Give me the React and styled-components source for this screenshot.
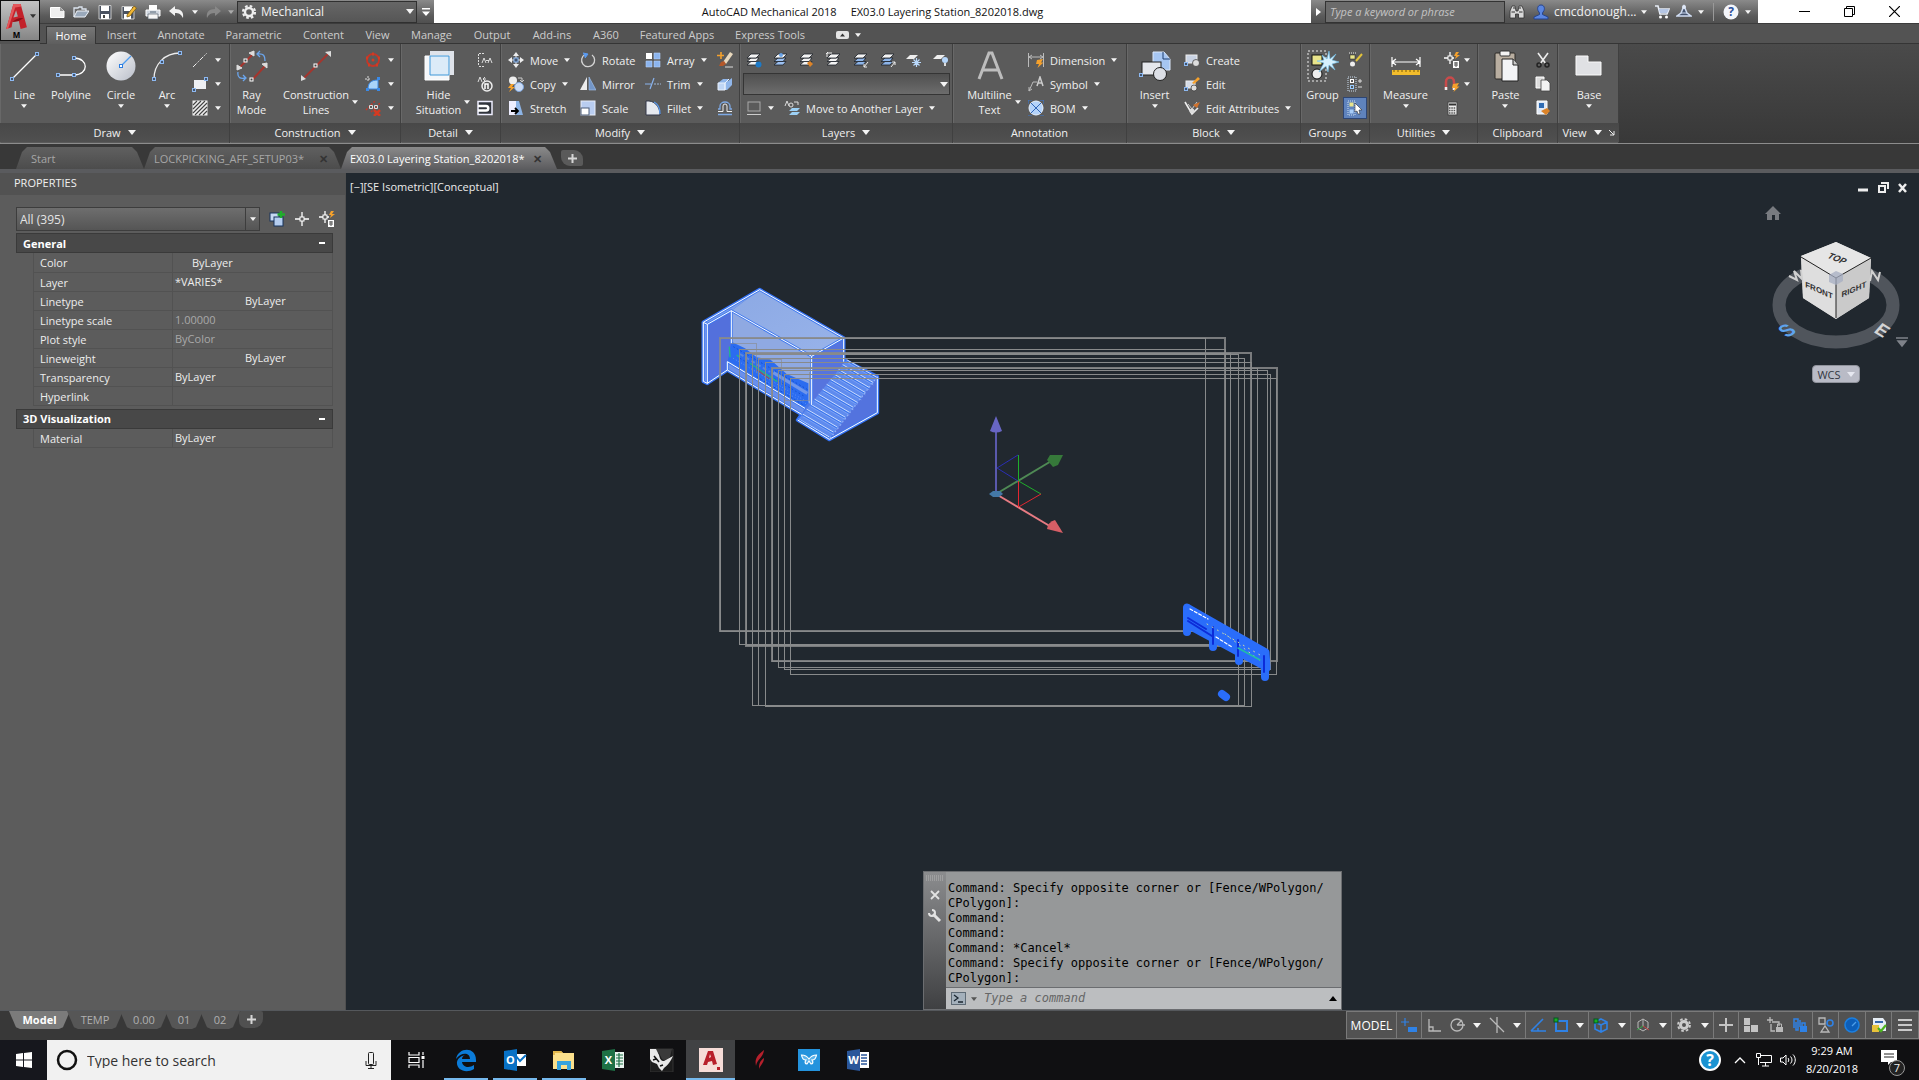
import React from "react";
import styled, { createGlobalStyle, css } from "styled-components";

const UI = `"Open Sans", "Noto Sans", "Liberation Sans", sans-serif`;

const Global = createGlobalStyle`
  * { box-sizing: border-box; }
  body { margin: 0; background: #383838; font: 11px/15px ${UI}; color: #f0f0f0; overflow: hidden; }
  button, input, select { font: inherit; color: inherit; margin: 0; padding: 0; border: 0; background: none; border-radius: 0; outline: 0; }
  svg { display: block; flex: none; }
`;

const Window = styled.div`
  display: flex;
  flex-direction: column;
  height: 100vh;
`;

/* ---------- generic glyphs ---------- */

const Caret = ({ size = 6, color = "#f4f4f4" }) => (
  <svg width={size} height={size / 2 + 1} viewBox="0 0 8 5">
    <path d="M0 0H8L4 5Z" fill={color} />
  </svg>
);

const Glyph = ({ s = 16, children }) => (
  <svg width={s} height={s} viewBox={`0 0 ${s} ${s}`} fill="none" aria-hidden="true">
    {children}
  </svg>
);

const Node = ({ x, y }) => (
  <rect x={x - 1.5} y={y - 1.5} width="3" height="3" fill="#43556e" stroke="#8db9f2" />
);

const Sheets = ({ tint = "#f4f4f4", children }) => (
  <Glyph>
    <path d="M5 9.500H13L10 13H1Z" fill={tint} stroke="#1d222a" strokeWidth=".8" />
    <path d="M5 6H13L10 9.500H1Z" fill={tint} stroke="#1d222a" strokeWidth=".8" />
    <path d="M5 2H14L10 6H1Z" fill="#f4f4f4" stroke="#1d222a" strokeWidth=".8" />
    {children}
  </Glyph>
);

const bolt = <path d="M9 8L15 7L13 10.5L15.5 10.5L9.5 16L11 12H8Z" fill="#f5a12c" />;

const icons = {
  logo: (
    <svg width="24" height="27" viewBox="0 0 26 30" aria-hidden="true">
      <path d="M1 29L9 1H17L24 27L17 29L15 20L8 21L7 27Z" fill="#c3212a" />
      <path d="M12 8L9 16L14 15Z" fill="#aaa" />
      <path d="M9 1H17L18 4L11 5L3 29H1Z" fill="#e4575a" />
      <path d="M8 21C12 17 17 16 20 17L15 20Z" fill="#8b0f16" />
    </svg>
  ),
  fileNew: <Glyph><path d="M1.5 3.5H11L15 7V13.5H1.5Z" fill="#eee" stroke="#fff" /><path d="M11 3L15 7H11Z" fill="#999" /></Glyph>,
  open: <Glyph><path d="M1 13V4H5L6 3H9V5H13V7" stroke="#dce4ee" strokeWidth="1.3" /><path d="M1 13L4 7H16L12 13Z" fill="#9aa9bb" stroke="#eef2f8" /></Glyph>,
  save: <Glyph><path d="M2 1.500H14V15H2Z" fill="#4a5260" stroke="#c8c8c8" /><rect x="4" y="2" width="8" height="5" fill="#fff" /><rect x="4" y="10" width="8" height="5" fill="#fff" /><rect x="6" y="11" width="2" height="3" fill="#444" /></Glyph>,
  saveAs: <Glyph><path d="M1 2.500H13V15H1Z" fill="#4a5260" stroke="#c8c8c8" /><rect x="3" y="3" width="8" height="4" fill="#fff" /><rect x="3" y="10" width="7" height="5" fill="#fff" /><path d="M6 11L13 2L15.500 4L9 12L6 13Z" fill="#f0b636" stroke="#70510a" strokeWidth=".7" /></Glyph>,
  print: <Glyph><path d="M4 1H12V6H4Z" fill="#fff" /><path d="M1 6H15V12H1Z" fill="#cfd6df" stroke="#fff" /><path d="M3 10H13V15H3Z" fill="#f6f6f6" stroke="#5a6470" strokeWidth=".7" /><path d="M5 8H11" stroke="#567" /></Glyph>,
  undo: <Glyph><path d="M6 2V5C12 5 15 8 14 14C12 10 10 9 6 9V12L0 7Z" fill="#f2f2f2" /></Glyph>,
  redo: <Glyph><path d="M10 2V5C4 5 1 8 2 14C4 10 6 9 10 9V12L16 7Z" fill="#888" /></Glyph>,
  gear: <Glyph><circle cx="8" cy="8" r="4" stroke="#eee" strokeWidth="2.400" /><circle cx="8" cy="8" r="6" stroke="#eee" strokeWidth="2.200" strokeDasharray="2.600 2.110" /></Glyph>,
  binoc: <Glyph><path d="M1 14V7L3 2H6L7 7H9L10 2H13L15 7V14H9.500V10H6.500V14Z" fill="#d9d9d9" stroke="#333" strokeWidth=".8" /><path d="M2.500 8H6M10 8H13.500M4 4H6M10 4H12" stroke="#333" /></Glyph>,
  user: <Glyph><path d="M8 1C5 1 4 4 5 6.500L6.500 9V10.500L1 13V15H15V13L9.500 10.500V9L11 6.500C12 4 11 1 8 1Z" fill="#5b86e0" stroke="#24438e" /></Glyph>,
  cart: <Glyph><path d="M1 2H4L6 10H13L15 5H5" stroke="#e8edf6" strokeWidth="1.600" /><path d="M5 5H15L13 9H6Z" fill="#b5c6e4" /><circle cx="6.500" cy="13" r="1.500" fill="#fff" /><circle cx="12.500" cy="13" r="1.500" fill="#fff" /></Glyph>,
  share: <Glyph><path d="M8 2L11 9L15 12H1L5 9Z" stroke="#cfdcf2" strokeWidth="1.500" fill="#45536e" /><circle cx="8" cy="3" r="2" fill="#dfe8f7" /><path d="M5 9H11" stroke="#cfdcf2" /></Glyph>,
  line: <Glyph s={32}><path d="M3 29L28 4" stroke="#fff" strokeWidth="1.200" /><Node x={3} y={29} /><Node x={28} y={4} /></Glyph>,
  polyline: <Glyph s={32}><path d="M3 25H19C34 25 34 8 19 8" stroke="#fff" strokeWidth="1.300" /><Node x={3} y={25} /><Node x={19} y={25} /><Node x={19} y={8} /></Glyph>,
  circle: (
    <Glyph s={32}>
      <defs><linearGradient id="disc" x2="1" y2="1"><stop stopColor="#fff" /><stop offset="1" stopColor="#b9bec9" /></linearGradient></defs>
      <circle cx="16" cy="16" r="14.500" fill="url(#disc)" /><path d="M16 16L26 6" stroke="#4b9bf0" strokeWidth="1.200" /><rect x="14.500" y="14.500" width="3" height="3" fill="#fff" stroke="#2c7de0" />
    </Glyph>
  ),
  arc: <Glyph s={32}><path d="M3 29C3 14 14 3 29 3" stroke="#eee" strokeWidth="1.300" /><Node x={3} y={29} /><Node x={11} y={12} /><Node x={29} y={3} /></Glyph>,
  centerLine: <Glyph><path d="M1 15L15 1" stroke="#eee" strokeDasharray="5 1.500 1.500 1.500" /></Glyph>,
  rect: <Glyph><rect x="2" y="4" width="12" height="9" fill="#eef0f4" /><Node x={2} y={14} /><Node x={14} y={3} /></Glyph>,
  hatch: <Glyph><rect x=".5" y=".5" width="15" height="15" fill="#eee" /><path d="M1 5L5 1M1 9L9 1M1 13L13 1M3 15L15 3M7 15L15 7M11 15L15 11" stroke="#444" strokeWidth="1.100" /></Glyph>,
  ray: (
    <Glyph s={32}>
      <path d="M4 17L16 5M17 29L29 16" stroke="#a5352d" strokeWidth="2" />
      <path d="M18 1V6L13 3ZM1 15V20L6 18ZM31 13V18L26 14Z" fill="#ddd" stroke="#ddd" />
      <path d="M21 4C28 3 29 6 29 11M24 1L21 4L24 7M2 22C1 28 5 29 9 28M7 25L10 28L7 31" stroke="#6ba6ee" strokeWidth="1.300" />
      <rect x="8" y="9" width="3" height="3" fill="#444" stroke="#fff" /><rect x="14" y="28" width="3" height="3" fill="#444" stroke="#fff" />
    </Glyph>
  ),
  xline: <Glyph s={32}><path d="M4 28L28 4" stroke="#a5352d" strokeWidth="1.800" /><path d="M31 1V7L25 2ZM1 31V25L6 29Z" fill="#ddd" /><rect x="14" y="14" width="3" height="3" fill="#444" stroke="#fff" /></Glyph>,
  redCircle: <Glyph><circle cx="8" cy="8" r="6" stroke="#c43628" strokeWidth="1.800" /><circle cx="8" cy="8" r="1.500" fill="#d33b22" /><path d="M7 2H9M1 6H3M13 6H15M3 13H5M11 13H13" stroke="#d33b22" strokeWidth="3" /></Glyph>,
  contour: <Glyph><path d="M3 13C3 7 6 4 13 4V13Z" fill="#a9d4fa" stroke="#3a8ae8" /><path d="M0 3H6M3 0V6" stroke="#ddd" strokeDasharray="2 1" /><path d="M12 1h3v3h-3zM1 12h3v3H1zM12 12h3v3h-3z" fill="#3a8ae8" /></Glyph>,
  eraseC: <Glyph><path d="M1 10L10 1M6 12L15 3" stroke="#c43628" strokeDasharray="2 1.500" strokeWidth="1.500" /><path d="M4.500 5.500h3v3h-3zM9.500 5.500h3v3h-3z" stroke="#ddd" /><path d="M9 10L15 16M15 10L9 16" stroke="#d33b22" strokeWidth="2.500" /></Glyph>,
  hide: <Glyph s={32}><path d="M7 1H31V25H7Z" fill="#dfe3ea" /><path d="M2 6H26V30H2Z" fill="#f5f7fa" stroke="#fff" /><path d="M7 6H26V25H7Z" fill="#dcebf8" stroke="#3f97d8" /></Glyph>,
  section: <Glyph><path d="M1.500 2V14M2 1.500H8M2 14.500H8" stroke="#ddd" strokeDasharray="2 1" /><path d="M5 11L7 6L9 11M9 8.500H12M11 11L13 6L15 11" stroke="#ddd" /></Glyph>,
  detail: <Glyph><path d="M1 6L3 1L5 6M8 1L6 3L8 5M6 3H9" stroke="#ddd" /><circle cx="10" cy="10" r="5" stroke="#eee" strokeWidth="1.500" /><path d="M8 13V8H11V13" stroke="#fff" strokeWidth="1.500" /></Glyph>,
  breakout: <Glyph><rect x="1" y="1.500" width="14" height="13" fill="#30343c" stroke="#eef" strokeWidth="1.500" /><path d="M1 6H9C12 6 12 10.500 9 10.500H1" stroke="#fff" strokeWidth="2.500" /></Glyph>,
  move: <Glyph><path d="M8 0L11 4H5ZM8 16L11 12H5ZM0 8L4 5V11ZM16 8L12 5V11Z" fill="#eee" /><path d="M8 3V13M3 8H13" stroke="#eee" /><rect x="6" y="6" width="4" height="4" fill="#43556e" stroke="#8db9f2" /></Glyph>,
  copy: <Glyph><circle cx="5" cy="4.500" r="4" fill="#eee" /><circle cx="11" cy="11" r="4.500" fill="#cbdcf6" stroke="#7ea5dc" /><path d="M10 2H14V5M12 4L14 6L16 4" stroke="#ccc" /><path d="M3 8L0 12H3L1 16L7 11H4L6 8Z" fill="#f5a12c" /></Glyph>,
  stretch: <Glyph><path d="M1 1H8V15H1Z" fill="#eef" /><path d="M8 1H11L15 15H8Z" fill="#8db4e6" /><path d="M3 11H9M7 8L10 11L7 14" stroke="#000" strokeWidth="1.800" /></Glyph>,
  rotate: <Glyph><path d="M12 3A6.500 6.500 0 1 1 5 2.500" stroke="#d5d5d5" strokeWidth="1.300" /><path d="M3 1L8 2L5 6" fill="#5b9bf0" stroke="#5b9bf0" /></Glyph>,
  mirror: <Glyph><path d="M7 1V14H0Z" fill="#eee" /><path d="M9 1V14H16Z" fill="#7396c8" stroke="#a8c7f0" strokeWidth=".6" /></Glyph>,
  scale: <Glyph><rect x="1" y="1" width="14" height="14" fill="#b9cdf0" stroke="#e9eef8" /><rect x="1" y="8" width="8" height="7" fill="#fff" stroke="#4c5c78" /></Glyph>,
  array: <Glyph><path d="M1 1H7V7H1Z" fill="#fff" /><path d="M9 1H15V7H9ZM1 9H7V15H1ZM9 9H15V15H9Z" fill="#8bb4ee" stroke="#b5d1f8" strokeWidth=".6" /></Glyph>,
  trim: <Glyph><path d="M0 8H6M5 13L9 2" stroke="#89b3ee" strokeWidth="1.200" /><path d="M9 8H16" stroke="#9fb8d8" strokeDasharray="2 1" /></Glyph>,
  fillet: <Glyph><path d="M1 1C9 0 15 6 15 15H1Z" fill="#e6e9ef" stroke="#34394a" /><path d="M9 2C13 4 15 9 15 14" stroke="#5b9bf0" strokeWidth="1.300" /></Glyph>,
  erase: <Glyph><path d="M6 10L13 0L16 2L9 12Z" fill="#e8d8bd" /><path d="M4 10L7 9L9 12L6 14L2 14Z" fill="#b4582a" /><path d="M4 0V7M0 3.500H7" stroke="#f5a12c" strokeWidth="1.600" /><path d="M8 15H16" stroke="#ddd" /></Glyph>,
  box: <Glyph><path d="M1 7L6 3H11V5L15 2V9L10 14H1Z" fill="#90b6ea" /><path d="M1 7H8V14H1ZM8 7L12 3M8 7V14" stroke="#e8f0fb" fill="#c0d6f5" /></Glyph>,
  offset: <Glyph><path d="M1 11.500H6V6A2 2 0 0 1 10 6V11.500H15" stroke="#eee" /><path d="M1 14.500H15M1 9H3V6A5 4 0 0 1 13 6V9H15" stroke="#7ea9e4" strokeWidth="1.300" /></Glyph>,
  lay1: <Sheets><circle cx="12.500" cy="12.500" r="3" fill="#1c7ac8" /></Sheets>,
  lay2: <Sheets tint="#9cc0f0"><circle cx="8" cy="3" r="2" fill="#6aa4e8" /></Sheets>,
  lay3: <Sheets><path d="M8 11L11 9L14 12L11 15Z" fill="#dc8328" /></Sheets>,
  lay4: <Sheets><path d="M6 1H1V5M0 2L2 0" stroke="#eee" /></Sheets>,
  lay5: <Sheets tint="#8db4e8"><path d="M15 10L11 15M11 12V15H14" stroke="#eee" /></Sheets>,
  lay6: <Sheets tint="#8db4e8"><path d="M11 15L15 10M12 10H15V13" stroke="#eee" /></Sheets>,
  lay7: <Glyph><path d="M4 3H12L8 7H0Z" fill="#eee" /><path d="M10.500 6V15M6 10.500H15M7.500 7.500L13.500 13.500M13.500 7.500L7.500 13.500" stroke="#b9d8fb" strokeWidth="1.200" /></Glyph>,
  lay8: <Glyph><path d="M4 3H12L8 7H0Z" fill="#eee" /><circle cx="12" cy="8" r="3" fill="#b5d6fb" /><path d="M12 11V14" stroke="#ddd" strokeWidth="2" /></Glyph>,
  laySq: <Glyph><rect x="2" y="2" width="12" height="9" stroke="#aaa" /><path d="M1 14.500H15" stroke="#ccc" /></Glyph>,
  layMove: <Glyph><path d="M1 6L3 1L5 6M10 2H14V5" stroke="#ddd" /><circle cx="7" cy="5" r="2" stroke="#ddd" /><path d="M8 8H16L13 11H5ZM8 12H16L13 15H5Z" fill="#9cd0f5" /></Glyph>,
  mtext: <Glyph s={32}><path d="M5 29L15 3H18L28 29M9 20H24" stroke="#bdbdbd" strokeWidth="3" /></Glyph>,
  dim: <Glyph><path d="M.5 1V15M15.500 1V15M1 5H15M4 3L1 5L4 7M12 3L15 5L12 7" stroke="#bbb" />{bolt}</Glyph>,
  symbol: <Glyph><path d="M1 15L5 6H9M1 15V11M1 15L4 13" stroke="#bbb" /><path d="M9 10L12 1L15 10M10 7H14" stroke="#ccc" strokeWidth="1.500" /></Glyph>,
  bom: <Glyph><path d="M0 0H4M12 0H16M0 16H4M12 16H16M0 0V4M16 0V4" stroke="#3a78d0" /><circle cx="8" cy="8" r="7" fill="#b4d3fa" stroke="#e9f3ff" /><path d="M3 3L13 13M13 3L3 13" stroke="#2f66b8" /></Glyph>,
  insert: <Glyph s={32}><path d="M14 2H25L31 9V20H14Z" fill="#a6c6f2" stroke="#dbe8fb" /><path d="M24 2V9H31" stroke="#1d3c6e" /><rect x="3" y="12" width="19" height="13" fill="#e5e7ec" stroke="#222" /><circle cx="21" cy="24" r="6.500" fill="#dcdfe6" stroke="#222" /><Node x={2} y={25} /></Glyph>,
  create: <Glyph><rect x="2" y="3" width="11" height="8" fill="#c9d3e4" stroke="#eee" /><circle cx="12" cy="11" r="3.500" fill="#ddd" stroke="#333" strokeWidth=".7" /><Node x={2} y={12} /></Glyph>,
  edit: <Glyph><rect x="2" y="5" width="9" height="7" fill="#d5dbe6" stroke="#eee" /><circle cx="10" cy="12" r="3" fill="#ddd" stroke="#333" strokeWidth=".7" /><path d="M8 7L14 1L16 3L10 8Z" fill="#f5a12c" /><Node x={2} y={13} /></Glyph>,
  attr: <Glyph><path d="M1 2L8 14L14 8" stroke="#eee" strokeWidth="1.600" /><path d="M4 4L8 9L13 2" stroke="#ccc" /><path d="M9 5L13 8L16 2Z" fill="#d2722c" /><circle cx="8" cy="11" r="2.500" fill="#ddd" /></Glyph>,
  group: (
    <Glyph s={32}>
      <path d="M1 1H19V31H1Z" stroke="#eee" strokeDasharray="2 2" /><rect x="5" y="5" width="10" height="10" fill="#e8e48c" stroke="#111" />
      <circle cx="10" cy="24" r="5" fill="#eee" stroke="#111" /><path d="M22 1L23 9L29 4L25 10L32 12L25 14L28 20L22 15L21 22L19 16L12 22L17 13L10 11L17 10L15 5L20 9Z" fill="#d6f1fe" stroke="#6cc0ec" strokeWidth=".6" />
    </Glyph>
  ),
  grpEdit: <Glyph><path d="M2 1H10" stroke="#eee" strokeDasharray="1 1" /><rect x="3" y="3" width="5" height="4" fill="#e8e48c" stroke="#222" strokeWidth=".5" /><circle cx="5.500" cy="12" r="2.500" fill="#eee" /><path d="M9 9L15 2" stroke="#e2c23a" strokeWidth="2" /></Glyph>,
  grpAdd: <Glyph><path d="M1 1H9V15H1Z" stroke="#cde" strokeDasharray="1 1" /><rect x="3.500" y="3.500" width="3" height="3" stroke="#fff" /><rect x="3.500" y="9.500" width="3" height="3" stroke="#9cf" /><path d="M11 5H15M13 3V7M11 11H15" stroke="#ddd" /></Glyph>,
  grpSel: <Glyph><path d="M1 1H8V15H1Z" stroke="#cde" strokeDasharray="1 1" /><rect x="2.500" y="2.500" width="4" height="4" fill="#e8e48c" /><rect x="2.500" y="9.500" width="4" height="4" fill="#a8cdf8" /><path d="M8 3L15 10H12L13 14L11 14L10 11L8 12Z" fill="#fff" stroke="#333" strokeWidth=".6" /></Glyph>,
  measure: <Glyph s={32}><path d="M2 7V17M30 7V17M2 12H30M6 9L2 12L6 15M26 9L30 12L26 15" stroke="#fff" strokeWidth="1.200" /><rect x="2" y="20" width="28" height="5" fill="#f3bd2c" /><path d="M4 20V22M8 20V22M12 20V22M16 20V22M20 20V22M24 20V22M28 20V22" stroke="#7d5c06" /></Glyph>,
  qsel: <Glyph><path d="M0 6H4M8 6H10M6 0V4M6 8V12" stroke="#fff" strokeWidth="1.300" /><rect x="4" y="4" width="4" height="4" stroke="#fff" /><path d="M12 0L15 0L13 3H16L11 7L12 4H10Z" fill="#f5a12c" /><rect x="9" y="9" width="6" height="7" fill="#fff" /><path d="M10 11H14M10 13H14M12 10V15" stroke="#555" /></Glyph>,
  magnet: <Glyph><path d="M2 14V6C2 0 10 0 10 6V14" stroke="#c94b4b" strokeWidth="2.500" /><path d="M2 11V14M10 11V14" stroke="#eee" strokeWidth="2.500" />{bolt}</Glyph>,
  calc: <Glyph><rect x="4" y="2" width="9" height="13" fill="#eee" stroke="#444" /><path d="M5 4.500H12" stroke="#333" strokeWidth="2" /><path d="M5 8H12M5 10.500H12M5 13H12" stroke="#555" strokeDasharray="1.500 .8" strokeWidth="1.300" /></Glyph>,
  paste: <Glyph s={32}><rect x="5" y="3" width="20" height="26" rx="1" fill="#b9aea0" stroke="#2d2a26" /><rect x="10" y="1" width="10" height="5" rx="1" fill="#f4f4f4" stroke="#333" /><path d="M12 9H23L28 15V31H12Z" fill="#f3f4f6" stroke="#222" /><path d="M23 9V15H28" stroke="#222" fill="#ccc" /></Glyph>,
  cut: <Glyph><path d="M3 1L11 12M13 1L5 12" stroke="#eee" strokeWidth="1.600" /><circle cx="4" cy="13" r="2" stroke="#222" strokeWidth="1.500" /><circle cx="12" cy="13" r="2" stroke="#222" strokeWidth="1.500" /></Glyph>,
  copyClip: <Glyph><path d="M1 1H9V12H1Z" fill="#ddd" stroke="#fff" /><path d="M6 4H12L15 7V15H6Z" fill="#f4f4f4" stroke="#444" strokeWidth=".8" /></Glyph>,
  matchProp: <Glyph><path d="M2 1H12V14H2Z" fill="#dfe8f5" stroke="#fff" /><rect x="4" y="3" width="5" height="5" fill="#2f6cb4" /><path d="M6 11L12 8L15 11L11 15Z" fill="#dc8328" /></Glyph>,
  base: <Glyph s={32}><path d="M3 6H15V12H28V25H3Z" fill="#e0e1e4" stroke="#fafafa" /></Glyph>,
  pick: <Glyph><rect x="1" y="2" width="9" height="8" fill="#c6d8f2" stroke="#16325c" /><rect x="5" y="6" width="9" height="9" fill="#b4cdf0" stroke="#16325c" /><path d="M12 0V7M8.500 3.500H16" stroke="#1fae2b" strokeWidth="2.500" /></Glyph>,
  target: <Glyph><path d="M1 8H6M10 8H15M8 1V6M8 10V15" stroke="#fff" strokeWidth="1.300" /><rect x="6" y="6" width="4" height="4" stroke="#fff" /></Glyph>,
};

/* ---------- title bar + ribbon tabs ---------- */

const Header = styled.header`
  display: grid;
  grid-template-columns: 40px minmax(0, 1fr);
  grid-template-rows: 24px 20px;
  background: #535353;
`;

const AppButton = styled.button`
  grid-row: 1 / 3;
  height: 41px;
  display: grid;
  grid-template-columns: 1fr 6px;
  justify-items: center;
  align-items: center;
  padding: 1px 3px 1px 2px;
  border: 1px solid #111;
  background: linear-gradient(#c4c4c4, #858585);
  color: #000;
  font-weight: 700;
  font-size: 8px;
  line-height: 8px;
`;

const TitleBar = styled.div`
  display: flex;
  background: #fff;
  border-bottom: 1px solid #3c3c3c;
`;

const chrome = css`
  display: flex;
  align-items: center;
  background: linear-gradient(#8a8a8a, #5a5a5a 70%, #505050);
`;

const QuickAccess = styled.div`
  ${chrome}
  width: 394px;
  padding-left: 5px;
`;

const QuickButton = styled.button`
  width: ${(p) => p.$w || 32}px;
  height: 22px;
  display: grid;
  place-items: center;
`;

const Workspace = styled.label`
  display: flex;
  align-items: center;
  gap: 4px;
  width: 180px;
  height: 22px;
  margin-left: auto;
  padding: 0 2px 0 3px;
  background: linear-gradient(#666, #565656);
  border: 1px solid #303030;
  select { flex: 1; min-width: 0; appearance: none; font-size: 12px; }
`;

const WindowTitle = styled.div`
  flex: 1;
  display: flex;
  justify-content: center;
  align-items: center;
  gap: 14px;
  color: #111;
`;

const InfoCenter = styled.div`
  ${chrome}
  width: 447px;
  & > input {
    width: 180px;
    height: 22px;
    padding: 0 4px;
    border: 1px solid #333;
    background: #6b6b6b;
    font-style: italic;
  }
  input::placeholder { color: #c4c4c4; opacity: 1; }
`;

const Account = styled.button`
  display: flex;
  align-items: center;
  gap: 5px;
  padding: 0 4px;
  font-size: 12px;
`;

const Divider = styled.span`
  width: 1px;
  height: 18px;
  margin: 0 6px;
  background: #999;
`;

const CaptionButtons = styled.div`
  display: flex;
  margin-left: 24px;
  padding-right: 2px;
`;

const CaptionButton = styled.button`
  width: 45px;
  display: grid;
  place-items: center;
`;

const RibbonTabs = styled.nav`
  display: flex;
  align-items: flex-end;
  padding-left: 6px;
  border-bottom: 1px solid #353535;
`;

const RibbonTab = styled.button`
  width: ${(p) => p.$w}px;
  height: 17px;
  color: ${(p) => (p.$on ? "#fff" : "#cdcdcd")};
  ${(p) => p.$on && css`
    height: 18px;
    margin-bottom: -1px;
    background: linear-gradient(#777, #5e5e5e);
    border: 1px solid #353535;
    border-bottom: 0;
  `}
`;

const RibbonToggle = styled.button`
  display: flex;
  align-items: center;
  gap: 6px;
  height: 17px;
  margin-left: 21px;
`;

/* ---------- ribbon ---------- */

const Ribbon = styled.div`
  display: flex;
  height: 100px;
  background: linear-gradient(#4a4a4a, #383838);
  border-bottom: 1px solid #8c8c8c;
`;

const PanelBox = styled.section`
  display: grid;
  grid-template-rows: 1fr 19px;
  width: ${(p) => p.$w}px;
  padding-bottom: 1px;
  background: #5b5b5b;
  border-right: 1px solid #404040;
  box-shadow: inset 1px 0 #686868;
`;

const PanelBody = styled.div`
  display: flex;
  align-items: flex-start;
  padding: 4px 0 0 ${(p) => p.$pad}px;
`;

const PanelTitle = styled.button`
  display: flex;
  align-items: center;
  justify-content: center;
  gap: 7px;
  background: linear-gradient(#484848, #505050);
`;

const Panel = ({ title, w, pad = 1, menu = true, launcher, children }) => (
  <PanelBox $w={w}>
    <PanelBody $pad={pad}>{children}</PanelBody>
    <PanelTitle>
      {title}
      {menu && <Caret size={8} />}
      {launcher && (
        <svg width="6" height="6" viewBox="0 0 6 6" fill="none"><path d="M0 0L5 5M5 1V5H1" stroke="#eee" /></svg>
      )}
    </PanelTitle>
  </PanelBox>
);

const LargeButton = styled.button`
  width: ${(p) => p.$w}px;
  height: 72px;
  display: flex;
  flex-direction: column;
  align-items: center;
  padding-top: 2px;
`;

const LargeLabel = styled.span`
  display: flex;
  flex-direction: column;
  align-items: center;
  gap: 2px;
  margin-top: 5px;
  line-height: 15px;
`;

const TwoLine = styled.span`
  display: flex;
  align-items: center;
  gap: 3px;
  padding-left: ${(p) => (p.$menu ? 9 : 0)}px;
`;

const Large = ({ icon, label, w, menu, second }) => (
  <LargeButton $w={w}>
    {icons[icon]}
    {second ? (
      <LargeLabel>
        <TwoLine $menu={menu}>
          <span>{label}<br />{second}</span>
          {menu && <Caret />}
        </TwoLine>
      </LargeLabel>
    ) : (
      <LargeLabel>{label}{menu && <Caret />}</LargeLabel>
    )}
  </LargeButton>
);

const Column = styled.div`
  display: flex;
  flex-direction: column;
  width: ${(p) => p.$w}px;
  padding-left: ${(p) => p.$pad || 0}px;
`;

const ToolButton = styled.button`
  display: flex;
  align-items: center;
  gap: ${(p) => p.$gap || 6}px;
  height: 24px;
  white-space: nowrap;
  flex: none;
`;

const ToggledTool = styled.button`
  width: 24px;
  height: 22px;
  display: grid;
  place-items: center;
  margin: 1px 0 0 -4px;
  background: #5f83bd;
  border: 1px solid #2e4674;
`;

const Tool = ({ icon, label, menu, gap }) => (
  <ToolButton $gap={gap} aria-label={label || icon}>
    {icons[icon]}
    {label && <span>{label}</span>}
    {menu && <Caret />}
  </ToolButton>
);

const LayerIcons = styled.div`
  display: flex;
  justify-content: space-between;
  width: 203px;
  margin-left: 5px;
`;

const LayerSelect = styled.label`
  display: flex;
  align-items: center;
  height: 22px;
  margin: 1px 2px;
  padding-right: 1px;
  border: 1px solid #353535;
  background: linear-gradient(#505050, #6c6c6c);
  select { flex: 1; appearance: none; }
`;

const LayerRow = styled.div`
  display: flex;
  gap: 10px;
  padding-left: 5px;
`;

/* ---------- document tabs ---------- */

const DocTabs = styled.nav`
  display: flex;
  align-items: flex-end;
  height: 29px;
  padding-left: 16px;
  background: #383838;
  border-bottom: 4px solid #5a5b5e;
`;

const DocTab = styled.div`
  display: flex;
  align-items: center;
  gap: 8px;
  width: ${(p) => p.$w}px;
  height: 22px;
  padding: 0 ${(p) => p.$right || 13}px 0 ${(p) => p.$pad}px;
  clip-path: polygon(0 100%, 6px 5px, 11px 0, calc(100% - 12px) 0, calc(100% - 7px) 5px, 100% 100%);
  background: ${(p) => (p.$on ? "linear-gradient(#8a8a8a, #5c5c5f)" : "linear-gradient(#606060, #4c4c4c)")};
  color: ${(p) => (p.$on ? "#fff" : "#a6a6a6")};
  button { flex: 1; text-align: left; white-space: nowrap; }
  button + button { flex: none; color: #333; font-weight: 700; }
`;

const AddTab = styled.button`
  width: 22px;
  height: 16px;
  margin: 0 0 3px 4px;
  display: grid;
  place-items: center;
  background: #5a5a5a;
  border-radius: 2px 9px 2px 9px;
`;

const Plus = () => (
  <svg width="9" height="9" viewBox="0 0 9 9"><path d="M4.500 0V9M0 4.500H9" stroke="#d5d5d5" strokeWidth="2" /></svg>
);

/* ---------- properties palette ---------- */

const Workarea = styled.main`
  flex: 1;
  display: flex;
  min-height: 0;
`;

const Palette = styled.aside`
  width: 346px;
  background: #5c5c5c;
  border-right: 1px solid #505050;
`;

const PaletteTitle = styled.h2`
  margin: 0;
  height: 22px;
  padding-left: 14px;
  font-size: 11px;
  line-height: 20px;
  font-weight: 400;
  background: #525252;
`;

const SelectionRow = styled.div`
  display: flex;
  align-items: center;
  padding: 12px 0 0 16px;
  margin-bottom: 2px;
`;

const SelectionCombo = styled.label`
  display: flex;
  width: 244px;
  height: 24px;
  margin-right: 4px;
  border: 1px solid #3d3d3d;
  background: linear-gradient(#6e6e6e, #555);
  select { flex: 1; appearance: none; padding-left: 3px; font-size: 12px; color: #e4e4e4; }
  span { width: 14px; display: grid; place-items: center; border-left: 1px solid #3d3d3d; }
`;

const IconButton = styled.button`
  width: 25px;
  height: 22px;
  display: grid;
  place-items: center;
`;

const SectionTitle = styled.button`
  display: flex;
  width: 317px;
  height: 20px;
  margin: ${(p) => p.$top || 0}px 0 0 16px;
  padding: 0 7px 0 6px;
  justify-content: space-between;
  align-items: center;
  font-size: 11px;
  font-weight: 700;
  color: #fff;
  background: #484848;
  border: 1px solid #3a3a3a;
`;

const PropTable = styled.table`
  width: 300px;
  margin-left: 33px;
  border-collapse: collapse;
  table-layout: fixed;
  th, td {
    height: 19px;
    padding: 0 0 0 3px;
    border: 1px solid #525252;
    border-top: 0;
    line-height: 17px;
    font-weight: 400;
    text-align: left;
    color: #ededed;
  }
  th { width: 139px; padding-left: 6px; padding-top: 1px; }
`;

const Value = styled.td`
  && { padding-left: ${(p) => p.$pad || 2}px; color: ${(p) => (p.$dim ? "#a9a9a9" : "#ededed")}; }
`;

const general = [
  ["Color", "ByLayer", 19],
  ["Layer", "*VARIES*"],
  ["Linetype", "ByLayer", 72],
  ["Linetype scale", "1.00000", 2, true],
  ["Plot style", "ByColor", 2, true],
  ["Lineweight", "ByLayer", 72],
  ["Transparency", "ByLayer"],
  ["Hyperlink", ""],
];

const Properties = ({ rows }) => (
  <PropTable>
    <tbody>
      {rows.map(([name, value, pad, dim]) => (
        <tr key={name}>
          <th scope="row">{name}</th>
          <Value $pad={pad} $dim={dim}>{value}</Value>
        </tr>
      ))}
    </tbody>
  </PropTable>
);

const Minus = () => <svg width="6" height="2" viewBox="0 0 6 2"><path d="M0 1H6" stroke="#fff" strokeWidth="2" /></svg>;

/* ---------- viewport ---------- */

const Viewport = styled.section`
  position: relative;
  flex: 1;
  min-width: 0;
  background: #21282f;
  overflow: hidden;
`;

const ViewLabel = styled.div`
  padding: 6px 0 0 4px;
  color: #ececec;
`;

const ModelSvg = styled.svg`
  position: absolute;
  left: 334px;
  top: 97px;
`;

const ViewCubeBox = styled.div`
  position: absolute;
  right: 0;
  top: 0;
  width: 219px;
`;

const WcsButton = styled.button`
  position: absolute;
  left: 112px;
  top: 192px;
  display: flex;
  align-items: center;
  justify-content: center;
  gap: 6px;
  width: 48px;
  height: 18px;
  border-radius: 4px;
  background: #b9bbc6;
  border: 1px solid #8f929b;
  color: #33363f;
`;

const sheets = [
  [720, 338, 1205, 631, 1], [720, 338, 1225, 631, 2], [739, 349, 1225, 644, 1], [746, 353, 1251, 646, 2],
  [752, 354, 1238, 705, 1], [758, 358, 1244, 705, 1], [765, 362, 1251, 706, 1], [772, 368, 1277, 661, 2],
  [778, 370, 1267, 667, 1], [784, 374, 1270, 669, 1], [790, 378, 1276, 674, 1], [746, 353, 1230, 645, 1], [772, 368, 1257, 661, 1],
];

const stairCount = 13;

const Model = () => (
  <ModelSvg width="620" height="450" viewBox="680 270 620 450" fill="none">
    <defs>
      <linearGradient id="roof" x2="1" y2="1"><stop stopColor="#8ca9e4" /><stop offset="1" stopColor="#98b3ea" /></linearGradient>
    </defs>
    <g transform="translate(690 280) scale(.33333)" strokeLinejoin="round">
      <path d="M40 127L209 29L461 174L461 240L562 290V398L418 478L323 420L335 403L112 270L52 310L40 304Z" fill="#4b78e6" stroke="#2d6df6" strokeWidth="11" />
      <path d="M124 92L209 29L461 174L365 229Z" fill="url(#roof)" />
      <path d="M40 127L209 29L124 92L52 133Z" fill="#7c9fea" />
      <path d="M52 133L124 92V262L52 310Z" fill="#5370dc" />
      <path d="M40 127L52 133V310L40 304Z" fill="#6f94ee" />
      <path d="M124 92L365 229V375L124 190Z" fill="#8fa9e2" />
      <path d="M124 185L165 205L200 232L240 238L290 282L355 310V368L335 390L112 250Z" fill="#2b6cf0" />
      <path d="M250 278L352 340" stroke="#6f96ea" strokeWidth="10" />
      <path d="M150 222L240 276" stroke="#5d87dc" strokeWidth="6" strokeDasharray="12 8" />
      <path d="M130 200L355 330M150 235L345 350M200 290L340 375" stroke="#1450d0" strokeWidth="3" strokeDasharray="5 7" />
      <path d="M130 235L345 362M220 300L350 372" stroke="#9dbcf8" strokeWidth="2" strokeDasharray="2 7" />
      <path d="M118 200L120 232M140 225L150 232M180 250L262 305" stroke="#25b58b" strokeWidth="4" />
      <path d="M202 270L238 296" stroke="#8e5a5e" strokeWidth="4" />
      <path d="M112 250L345 385L335 403L112 270Z" fill="#6b90ea" />
      <path d="M365 229L461 174V250L365 375Z" fill="#5674de" />
      <path d="M470 240L562 290L418 478L323 420Z" fill="#5f8bee" />
      <path d="M562 290V398L418 478Z" fill="#5373de" />
      {Array.from({ length: stairCount }, (_, i) => {
        const t = i / (stairCount - 1);
        const x = 470 - 144 * t;
        const y = 242 + 178 * t;
        return (
          <g key={i}>
            <path d={`M${x} ${y}l92 54`} stroke="#3b76ee" strokeWidth="6" />
            <path d={`M${x} ${y - 3}l92 54`} stroke="#e9f1ff" strokeWidth="2.500" />
            <path d={`M${x} ${y + 4}l92 54`} stroke="#a5bff6" strokeWidth="1.500" />
          </g>
        );
      })}
      <path d="M40 127L209 29L461 174L365 229L124 92L52 133L40 127V304L52 310L112 270M52 133V310M124 92V190M365 229V375M461 174V245M112 245L345 385M112 270L335 403M112 245V270M562 290V398L418 478L323 420" stroke="#3f79f0" strokeWidth="8" />
      <path d="M40 127L209 29L461 174L365 229L124 92L52 133L40 127V304L52 310L112 270M52 133V310M124 92V190M365 229V375M461 174V245M112 245L345 385M112 270L335 403M112 245V270M562 290V398L418 478L323 420" stroke="#fff" strokeWidth="3" />
      <path d="M562 290L418 478" stroke="#8fb0f8" strokeWidth="4" strokeDasharray="5 7" />
    </g>
    <g stroke="#888a8b" shapeRendering="crispEdges">
      {sheets.map(([x1, y1, x2, y2, w], i) => (
        <rect key={i} x={x1} y={y1} width={x2 - x1} height={y2 - y1} strokeWidth={w} strokeOpacity={w === 2 ? 0.85 : 1} />
      ))}
      <path d="M731 343H756V373M758 359H781V385M784 385V400H809V372M739 349V372M746 352V376" strokeOpacity=".6" />
    </g>
    <g>
      <path d="M996 424V492" stroke="#5a59ad" strokeWidth="2" />
      <path d="M996 416L1002 431Q996 434 990 431Z" fill="#6866c4" />
      <path d="M996 494L1053 460" stroke="#4f8a55" strokeWidth="2" />
      <path d="M1063 455L1050 455L1047 460L1053 467L1058 465Z" fill="#36793a" />
      <path d="M996 494L1053 528" stroke="#e77b83" strokeWidth="2" />
      <path d="M1063 533L1055 520Q1048 522 1047 529Z" fill="#d65e66" />
      <path d="M997 468L1018 455M997 468L1018 481" stroke="#2b2fb4" />
      <path d="M1018.500 455V481L1041 494" stroke="#1fae2b" />
      <path d="M1018.500 481V507L1041 494" stroke="#e32630" />
      <path d="M989 494L993 491H1000L1003 494L999 497H993Z" fill="#4478a6" />
    </g>
    <g strokeLinecap="round" strokeLinejoin="round">
      <path d="M1187 607L1266 652L1267 668L1187 625Z" fill="#2a6dfa" stroke="#2a6dfa" strokeWidth="7" />
      <path d="M1187 608V632M1213 625V647M1239 640V661M1265 655V677" stroke="#2a6dfa" strokeWidth="8" />
      <path d="M1188 618L1206 629M1188 621L1212 636M1213 627V644M1238 640V656M1264 656V672" stroke="#0c2cd8" strokeWidth="2" />
      <path d="M1190 609L1208 619M1216 637L1232 647" stroke="#fff" strokeWidth="1.200" strokeDasharray="3 2" />
      <path d="M1207 624L1260 655M1225 634L1262 662" stroke="#c9d9a8" strokeWidth="1" strokeDasharray="1 5" />
      <path d="M1238 648L1260 660" stroke="#22bda6" strokeWidth="1.500" />
      <path d="M1222 694L1226 697" stroke="#2a6dfa" strokeWidth="8" />
    </g>
  </ModelSvg>
);

const CubeText = styled.text`
  font: 700 ${(p) => p.$s}px "Liberation Sans Narrow", "Liberation Sans", sans-serif;
  text-anchor: middle;
`;

const ViewCube = () => (
  <ViewCubeBox>
    <svg width="219" height="190" viewBox="0 0 219 190" fill="none">
      <ellipse cx="136" cy="132" rx="57" ry="37" stroke="#50555c" strokeWidth="13" />
      <path d="M65 41L73 33L81 41H79V47H75V42H72V47H67V41Z" fill="#787b80" />
      <path d="M101 83L136 69L171 85L169 125L136 146L103 125Z" fill="#d8d8d8" />
      <path d="M101 83L136 69L171 85L136 105Z" fill="#e6e6e6" />
      <path d="M101 83L136 105V146L103 125Z" fill="#dedede" />
      <path d="M136 105L171 85L169 125L136 146Z" fill="#cacaca" />
      <path d="M101 84L136 105L171 85M136 105V145" stroke="#222" />
      <path d="M129 102L136 98L143 101V108L136 112L129 109Z" fill="#a5aec2" fillOpacity=".75" />
      <CubeText $s={8} fill="#333" transform="translate(119 120) skewY(24)">FRONT</CubeText>
      <CubeText $s={8} fill="#333" transform="translate(154 119) skewY(-24)">RIGHT</CubeText>
      <CubeText $s={9} fill="#333" transform="translate(135 88) rotate(22) skewX(-20)">TOP</CubeText>
      <CubeText $s={19} fill="#5ea4ee" transform="translate(92 162) rotate(-28) skewX(20)">S</CubeText>
      <CubeText $s={18} fill="#d4d4d4" transform="translate(178 162) rotate(32) skewX(-10)">E</CubeText>
      <path d="M89 103L97 107L94 98L102 106L101 97M170 108L172 98L178 107L180 99" stroke="#d0d0d0" strokeWidth="2" />
      <path d="M196 165H208M198 168H206L202 173Z" stroke="#7f838a" fill="#7f838a" strokeWidth="1.500" />
      <path d="M158 17H168" stroke="#eee" strokeWidth="3" />
      <path d="M179 13H185V19H179ZM181 10H188V16" stroke="#eee" strokeWidth="2" />
      <path d="M199 11L206 19M206 11L199 19" stroke="#eee" strokeWidth="2.500" />
    </svg>
    <WcsButton>WCS<Caret size={8} color="#e6e8f0" /></WcsButton>
  </ViewCubeBox>
);

const CommandWindow = styled.div`
  position: absolute;
  left: 577px;
  bottom: 0;
  width: 419px;
  display: grid;
  grid-template-columns: 22px 1fr;
  font: 12px/15px "DejaVu Sans Mono", "Liberation Mono", monospace;
  border: 1px solid #6b6d70;
`;

const CommandGrip = styled.div`
  display: flex;
  flex-direction: column;
  align-items: center;
  gap: 9px;
  padding: 3px 1px 0 0;
  background: linear-gradient(#8b8c8e, #3f4042);
`;

const CommandLog = styled.div`
  padding: 9px 0 1px 2px;
  background: #969899;
  color: #000;
  white-space: pre;
`;

const CommandInput = styled.label`
  display: flex;
  align-items: center;
  gap: 5px;
  height: 22px;
  padding: 0 4px 0 5px;
  background: #bcbec0;
  border-top: 1px solid #6b6d70;
  input { flex: 1; padding-left: 2px; font-style: italic; }
  input::placeholder { color: #666; opacity: 1; }
`;

const log = [
  "Command: Specify opposite corner or [Fence/WPolygon/",
  "CPolygon]:",
  "Command:",
  "Command:",
  "Command: *Cancel*",
  "Command: Specify opposite corner or [Fence/WPolygon/",
  "CPolygon]:",
];

/* ---------- layout tabs + status bar ---------- */

const Footer = styled.footer`
  display: flex;
  justify-content: space-between;
  height: 30px;
  background: #383838;
  border-top: 1px solid #55585c;
`;

const LayoutTabs = styled.nav`
  display: flex;
  align-items: flex-start;
  padding-left: 9px;
`;

const LayoutTab = styled.button`
  width: ${(p) => p.$w}px;
  height: 18px;
  margin-right: -3px;
  padding-bottom: 2px;
  font-weight: ${(p) => (p.$on ? 700 : 400)};
  color: ${(p) => (p.$on ? "#fff" : "#b0b0b0")};
  background: ${(p) => (p.$on ? "#7b7b7b" : "#565656")};
  clip-path: polygon(0 0, 100% 0, calc(100% - 7px) 90%, calc(100% - 11px) 100%, 11px 100%, 7px 90%);
`;

const AddLayout = styled.button`
  width: 24px;
  height: 17px;
  margin-left: 2px;
  display: grid;
  place-items: center;
  background: #505050;
  border-radius: 2px 2px 9px 7px;
`;

const StatusBar = styled.div`
  display: flex;
  height: 28px;
  border: 1px solid #7a7a7a;
`;

const StatusCell = styled.div`
  display: flex;
  align-items: center;
  justify-content: space-around;
  width: ${(p) => p.$w}px;
  border-right: 1px solid #7a7a7a;
  background: #525252;
  &:last-child { border-right: 0; }
  button { display: grid; place-items: center; height: 26px; min-width: 8px; font-size: 12px; color: #fff; }
`;

const B = "#2f82e6";
const G = "#b9b9b9";
const st = {
  infer: <Glyph><path d="M4 1V9M0 5H8" stroke={B} strokeWidth="1.200" /><rect x="7" y="10" width="9" height="5" fill={B} /></Glyph>,
  ortho: <Glyph><path d="M3 2V14H15M3 10H7V14" stroke={G} strokeWidth="1.300" /></Glyph>,
  polar: <Glyph><circle cx="7" cy="8" r="6" stroke={G} strokeWidth="1.300" /><path d="M7 8H15M7 8L12 3" stroke={G} strokeWidth="1.300" /></Glyph>,
  iso: <Glyph><path d="M8 0V16M1 1L15 15" stroke={G} strokeWidth="1.300" /></Glyph>,
  track: <Glyph><path d="M1 14H16M1 14L13 2M8 11V14" stroke={B} strokeWidth="1.600" /></Glyph>,
  osnap: <Glyph><rect x="3" y="4" width="11" height="10" stroke={B} strokeWidth="2" /><rect x="1" y="1" width="4" height="4" fill="#18b020" stroke="#052" /></Glyph>,
  osnap3: <Glyph><path d="M8 2L14 5V12L8 15L2 12V5ZM8 8L14 5M8 8L2 5M8 8V15" stroke={B} strokeWidth="1.600" /><rect x="1" y="2" width="4" height="4" fill="#18b020" stroke="#052" /></Glyph>,
  ucs: <Glyph><path d="M8 2L13 5V11L8 14L3 11V5ZM8 2V9" stroke={G} /><path d="M8 9L2 13" stroke="#3a4" /><path d="M8 9L14 13" stroke="#c44" /></Glyph>,
  gear: <Glyph><circle cx="8" cy="8" r="3.500" stroke="#ccc" strokeWidth="3" /><circle cx="8" cy="8" r="6" stroke="#ccc" strokeWidth="1.800" strokeDasharray="2.600 2.110" /></Glyph>,
  plus: <Glyph><path d="M8 1V15M1 8H15" stroke="#c4c4c4" strokeWidth="2" /></Glyph>,
  quick: <Glyph><path d="M1 1H7V8H1ZM1 9H7V15H1ZM8 8H15V15H8Z" fill="#c4c4c4" /></Glyph>,
  lock: <Glyph><path d="M3 0V6M0 3H6M4 7V14H8M5 5H12V9" stroke={G} strokeWidth="1.300" /><rect x="9" y="10" width="7" height="5" fill={G} /><path d="M10.500 10V7H14.500V10" stroke={G} /></Glyph>,
  annot: <Glyph><path d="M2 11V2H6V13H4V5M8 3V10" stroke={B} strokeWidth="1.500" /><rect x="8" y="9" width="7" height="6" fill={B} /><path d="M10 9V6H13V9" stroke={B} strokeWidth="1.500" /></Glyph>,
  isolate: <Glyph><path d="M1 1H7V7H1ZM3 15L7 9L11 15Z" stroke={G} strokeWidth="1.300" /><circle cx="12" cy="6" r="3" stroke={B} strokeWidth="1.600" /></Glyph>,
  perf: <Glyph><circle cx="8" cy="8" r="7" fill="#0d5eb8" stroke="#1b7fe0" strokeWidth="1.600" /><path d="M8 9L12 5" stroke="#4f9fe8" strokeWidth="1.300" /></Glyph>,
  trust: <Glyph><path d="M2 1H12L15 5V14H2Z" fill="#e6edf5" /><path d="M1 8H8V15H1Z" fill="#e8c23a" /><path d="M4 5H12" stroke="#36a" strokeWidth="2" /><path d="M7 11L10 14L15 8" stroke="#4cb41e" strokeWidth="2.200" /></Glyph>,
  menu: <Glyph><path d="M1 3H15M1 8H15M1 13H15" stroke="#c9c9c9" strokeWidth="2" /></Glyph>,
};

const statusCells = [
  [25, ["infer"]],
  [104, ["ortho", "polar", "v", "iso", "v"]],
  [63, ["track", "osnap", "v"]],
  [42, ["osnap3", "v"]],
  [41, ["ucs", "v"]],
  [42, ["gear", "v"]],
  [25, ["plus"]],
  [74, ["quick", "lock", "annot"]],
  [26, ["isolate"]],
  [27, ["perf"]],
  [26, ["trust"]],
  [26, ["menu"]],
];

/* ---------- Windows taskbar ---------- */

const Taskbar = styled.div`
  display: flex;
  height: 40px;
  background: #101012;
`;

const StartButton = styled.button`
  width: 47px;
  display: grid;
  place-items: center;
  background: #16171d;
`;

const SearchBox = styled.label`
  display: flex;
  align-items: center;
  gap: 9px;
  width: 344px;
  padding: 0 14px 0 9px;
  background: #f1f1f1;
  input { flex: 1; min-width: 0; font-size: 14px; }
  input::placeholder { color: #333; opacity: 1; }
`;

const TaskButton = styled.button`
  width: ${(p) => p.$w || 49}px;
  display: grid;
  place-items: center;
  padding-top: 2px;
  border-bottom: 2px solid transparent;
  ${(p) => p.$active && "background: #414244; border-bottom-color: #76b9ed;"}
  ${(p) => p.$open && css`
    border-image: linear-gradient(90deg, transparent 5px, #76b9ed 5px, #76b9ed 45px, transparent 45px) 2;
  `}
`;

const Tray = styled.div`
  display: flex;
  align-items: center;
  margin-left: auto;
  padding-right: 6px;
`;

const TrayButton = styled.button`
  width: ${(p) => p.$w || 24}px;
  height: 40px;
  display: grid;
  place-items: center;
`;

const Clock = styled.button`
  width: 64px;
  height: 40px;
  line-height: 18px;
  text-align: center;
  color: #fff;
`;

const Notify = styled.button`
  position: relative;
  width: 48px;
  height: 40px;
  display: grid;
  place-items: center;
  margin-left: 1px;
  padding-bottom: 4px;
  span {
    position: absolute;
    right: 8px;
    bottom: 4px;
    width: 16px;
    height: 16px;
    border-radius: 8px;
    border: 1px solid #999;
    background: #222;
    line-height: 14px;
  }
`;

const Office = ({ color, letter, children }) => (
  <svg width="24" height="24" viewBox="0 0 24 24" fill="none">
    {children}
    <path d="M1 3L14 1V23L1 21Z" fill={color} />
    <text x="7.500" y="16" textAnchor="middle" fontSize="11" fontWeight="700" fill="#fff">{letter}</text>
  </svg>
);

const apps = [
  ["Edge", <svg width="22" height="24" viewBox="0 0 22 24"><path d="M1 11C3-1 21-2 21 12V14H7C8 20 15 20 19 17V21C11 26 1 22 2 14C3 10 6 8 10 7C8 8 7 9 7 11H15C15 4 6 4 1 11Z" fill="#0b7bd8" /></svg>, 1],
  ["Outlook", <Office color="#0871c5" letter="O"><path d="M13 6H23V18H13Z" fill="#fff" /><path d="M13 8L17 13L23 7" stroke="#0871c5" strokeWidth="2" /></Office>, 1],
  ["Explorer", <svg width="24" height="22" viewBox="0 0 24 22"><path d="M1 2H9L11 4H22V20H1Z" fill="#fbe08c" /><path d="M1 2H9L11 4H3V6H1Z" fill="#e3b84d" /><path d="M5 12H19V21H15V16H9V21H5Z" fill="#36a3de" /></svg>, 1],
  ["Excel", <Office color="#1e7145" letter="X"><path d="M13 4H23V20H13Z" fill="#e9f4ee" /><path d="M15 7H22M15 10H22M15 13H22M15 16H22M18 5V19" stroke="#1e7145" strokeWidth="1.200" /></Office>],
  ["Rhinoceros", <svg width="24" height="24" viewBox="0 0 24 24"><path d="M0 1H23V24H0Z" fill="#1c1c1c" stroke="#333" /><path d="M0 1H22L20 9C17 12 14 13 12 11L9 5Z" fill="#3a3a3a" /><path d="M0 1L6 1L9 7C10 11 11 13 14 13L23 8C21 13 17 18 14 20L12 23L9 20L7 16L2 14L0 11Z" fill="#e8e8e8" /><path d="M4 8L9 14M10 18L13 17M3 12L6 11" stroke="#111" strokeWidth="1.500" fill="none" /></svg>],
  ["AutoCAD", <svg width="24" height="24" viewBox="0 0 24 24"><path d="M0 0H24V24H0Z" fill="#f6dcd8" /><path d="M4 17L9 3H14L18 16L14 17L13 13L9 14L8 17Z M10 10L12 9L11 6Z" fill="#b81f2b" fillRule="evenodd" /><path d="M18 19H21V22H18Z" fill="#b81f2b" /></svg>, 0, 1],
  ["Red app", <svg width="12" height="20" viewBox="0 0 12 20"><path d="M10 0C1 7 1 10 2 16C3 9 9 8 10 0ZM10 8C6 11 5 13 5 19C7 14 10 13 10 8Z" fill="#b5202c" /></svg>],
  ["Butterfly", <svg width="22" height="22" viewBox="0 0 22 22"><path d="M0 0H22V22H0Z" fill="#2493dd" /><path d="M11 10C9 7 6 6 3.500 6C4 9 5 11 8 11C6.500 13 7 15 9 15L11 12L13 15C15 15 15.500 13 14 11C17 11 18 9 18.500 6C16 6 13 7 11 10Z" fill="#5eb4ea" stroke="#fff" strokeWidth="1.200" /></svg>],
  ["Word", <Office color="#2b579a" letter="W"><path d="M13 4H23V20H13Z" fill="#fff" /><path d="M15 7H21M15 10H21M15 13H21M15 16H21" stroke="#2b579a" strokeWidth="1.300" /></Office>],
];

const ribbonTabs = [
  ["Home", 50], ["Insert", 51], ["Annotate", 68], ["Parametric", 77], ["Content", 63], ["View", 45],
  ["Manage", 63], ["Output", 58], ["Add-ins", 62], ["A360", 46], ["Featured Apps", 96], ["Express Tools", 90],
];

export default function App() {
  return (
    <Window>
      <Global />
      <Header>
        <AppButton aria-label="Application menu">
          {icons.logo}
          <Caret color="#333" />
          <span>M</span>
        </AppButton>
        <TitleBar>
          <QuickAccess>
            {["fileNew", "open", "save", "saveAs", "print", "undo"].map((k) => <QuickButton key={k} $w={24} aria-label={k}>{icons[k]}</QuickButton>)}
            <QuickButton $w={12} aria-label="Undo list"><Caret /></QuickButton>
            <QuickButton $w={24} aria-label="Redo">{icons.redo}</QuickButton>
            <QuickButton $w={12} aria-label="Redo list"><Caret color="#aaa" /></QuickButton>
            <Workspace>
              {icons.gear}
              <select aria-label="Workspace"><option>Mechanical</option></select>
              <Caret size={8} />
            </Workspace>
            <QuickButton $w={17} aria-label="Customize">
              <svg width="8" height="8" viewBox="0 0 8 8"><path d="M0 0H8V1.500H0ZM0 3.500H8L4 8Z" fill="#fff" /></svg>
            </QuickButton>
          </QuickAccess>
          <WindowTitle>
            <span>AutoCAD Mechanical 2018</span>
            <span>EX03.0 Layering Station_8202018.dwg</span>
          </WindowTitle>
          <InfoCenter>
            <QuickButton $w={14} aria-label="Collapse search">
              <svg width="5" height="8" viewBox="0 0 5 8"><path d="M0 0L5 4L0 8Z" fill="#fff" /></svg>
            </QuickButton>
            <input aria-label="Search help" placeholder="Type a keyword or phrase" />
            <QuickButton $w={24} aria-label="Search">{icons.binoc}</QuickButton>
            <Account>{icons.user}<span>cmcdonough...</span><Caret /></Account>
            <QuickButton $w={22} aria-label="App store">{icons.cart}</QuickButton>
            <QuickButton $w={22} aria-label="Stay connected">{icons.share}</QuickButton>
            <QuickButton $w={12} aria-label="Connect list"><Caret /></QuickButton>
            <Divider />
            <QuickButton $w={22} aria-label="Help">
              <svg width="16" height="16" viewBox="0 0 16 16">
                <circle cx="8" cy="8" r="7.500" fill="#f3f5fa" /><text x="8" y="12" textAnchor="middle" fontSize="12" fontWeight="700" fill="#2b4f9c">?</text>
              </svg>
            </QuickButton>
            <QuickButton $w={12} aria-label="Help list"><Caret /></QuickButton>
          </InfoCenter>
          <CaptionButtons>
            <CaptionButton aria-label="Minimize"><svg width="11" height="11" viewBox="0 0 11 11"><path d="M0 5.500H11" stroke="#000" /></svg></CaptionButton>
            <CaptionButton aria-label="Restore"><svg width="11" height="11" viewBox="0 0 11 11" fill="none"><path d="M.5 2.500H8.500V10.500H.5ZM2.500 2.500V.5H10.500V8.500H8.500" stroke="#000" /></svg></CaptionButton>
            <CaptionButton aria-label="Close"><svg width="11" height="11" viewBox="0 0 11 11"><path d="M0 0L11 11M11 0L0 11" stroke="#000" strokeWidth="1.200" /></svg></CaptionButton>
          </CaptionButtons>
        </TitleBar>
        <RibbonTabs>
          {ribbonTabs.map(([t, w], i) => <RibbonTab key={t} $w={w} $on={i === 0}>{t}</RibbonTab>)}
          <RibbonToggle aria-label="Minimize ribbon">
            <svg width="13" height="8" viewBox="0 0 13 8"><rect width="13" height="8" rx="2" fill="#e4e4e4" /><path d="M4 5.500L6.500 2.500L9 5.500Z" fill="#333" /></svg>
            <Caret />
          </RibbonToggle>
        </RibbonTabs>
      </Header>

      <Ribbon>
        <Panel title="Draw" w={230}>
          <Large icon="line" label="Line" w={47} menu />
          <Large icon="polyline" label="Polyline" w={46} />
          <Large icon="circle" label="Circle" w={54} menu />
          <Large icon="arc" label="Arc" w={38} menu />
          <Column $w={40} $pad={6}>
            <Tool icon="centerLine" menu gap={7} />
            <Tool icon="rect" menu gap={7} />
            <Tool icon="hatch" menu gap={7} />
          </Column>
        </Panel>
        <Panel title="Construction" w={171}>
          <Large icon="ray" label="Ray" second="Mode" w={41} />
          <Large icon="xline" label="Construction" second="Lines" w={88} menu />
          <Column $w={39} $pad={5}>
            <Tool icon="redCircle" menu gap={7} />
            <Tool icon="contour" menu gap={7} />
            <Tool icon="eraseC" menu gap={7} />
          </Column>
        </Panel>
        <Panel title="Detail" w={100}>
          <Large icon="hide" label="Hide" second="Situation" w={73} menu />
          <Column $w={23} $pad={2}>
            <Tool icon="section" />
            <Tool icon="detail" />
            <Tool icon="breakout" />
          </Column>
        </Panel>
        <Panel title="Modify" w={239} pad={7}>
          <Column $w={72}>
            <Tool icon="move" label="Move" menu />
            <Tool icon="copy" label="Copy" menu />
            <Tool icon="stretch" label="Stretch" />
          </Column>
          <Column $w={65}>
            <Tool icon="rotate" label="Rotate" />
            <Tool icon="mirror" label="Mirror" />
            <Tool icon="scale" label="Scale" />
          </Column>
          <Column $w={72}>
            <Tool icon="array" label="Array" menu />
            <Tool icon="trim" label="Trim" menu />
            <Tool icon="fillet" label="Fillet" menu />
          </Column>
          <Column $w={18}>
            <Tool icon="erase" />
            <Tool icon="box" />
            <Tool icon="offset" />
          </Column>
        </Panel>
        <Panel title="Layers" w={213}>
          <Column $w={211}>
            <LayerIcons>
              {[1, 2, 3, 4, 5, 6, 7, 8].map((n) => <Tool key={n} icon={`lay${n}`} />)}
            </LayerIcons>
            <LayerSelect><select aria-label="Layer"><option></option></select><Caret size={8} /></LayerSelect>
            <LayerRow>
              <Tool icon="laySq" menu />
              <Tool icon="layMove" label="Move to Another Layer" menu />
            </LayerRow>
          </Column>
        </Panel>
        <Panel title="Annotation" w={174} menu={false}>
          <Large icon="mtext" label="Multiline" second="Text" w={71} menu />
          <Column $w={90} $pad={3}>
            <Tool icon="dim" label="Dimension" menu />
            <Tool icon="symbol" label="Symbol" menu />
            <Tool icon="bom" label="BOM" menu />
          </Column>
        </Panel>
        <Panel title="Block" w={174}>
          <Large icon="insert" label="Insert" w={53} menu />
          <Column $w={110} $pad={3}>
            <Tool icon="create" label="Create" />
            <Tool icon="edit" label="Edit" />
            <Tool icon="attr" label="Edit Attributes" menu />
          </Column>
        </Panel>
        <Panel title="Groups" w={69}>
          <Large icon="group" label="Group" w={41} />
          <Column $w={24} $pad={4}>
            <Tool icon="grpEdit" />
            <Tool icon="grpAdd" />
            <ToggledTool aria-label="Group selection">{icons.grpSel}</ToggledTool>
          </Column>
        </Panel>
        <Panel title="Utilities" w={108}>
          <Large icon="measure" label="Measure" w={69} menu />
          <Column $w={34} $pad={4}>
            <Tool icon="qsel" menu gap={4} />
            <Tool icon="magnet" menu gap={4} />
            <Tool icon="calc" />
          </Column>
        </Panel>
        <Panel title="Clipboard" w={80} menu={false}>
          <Large icon="paste" label="Paste" w={53} menu />
          <Column $w={20} $pad={3}>
            <Tool icon="cut" />
            <Tool icon="copyClip" />
            <Tool icon="matchProp" />
          </Column>
        </Panel>
        <Panel title="View" w={61} launcher>
          <Large icon="base" label="Base" w={60} menu />
        </Panel>
      </Ribbon>

      <DocTabs>
        <DocTab $w={128} $pad={15}><button>Start</button></DocTab>
        <DocTab $w={197} $pad={10}><button>LOCKPICKING_AFF_SETUP03*</button><button aria-label="Close tab">✕</button></DocTab>
        <DocTab $w={216} $pad={9} $right={15} $on><button>EX03.0 Layering Station_8202018*</button><button aria-label="Close tab">✕</button></DocTab>
        <AddTab aria-label="New drawing"><Plus /></AddTab>
      </DocTabs>

      <Workarea>
        <Palette>
          <PaletteTitle>PROPERTIES</PaletteTitle>
          <SelectionRow>
            <SelectionCombo>
              <select aria-label="Selection"><option>All (395)</option></select>
              <span><Caret /></span>
            </SelectionCombo>
            {["pick", "target", "qsel"].map((k) => <IconButton key={k} aria-label={k}>{icons[k]}</IconButton>)}
          </SelectionRow>
          <SectionTitle>General<Minus /></SectionTitle>
          <Properties rows={general} />
          <SectionTitle $top={3}>3D Visualization<Minus /></SectionTitle>
          <Properties rows={[["Material", "ByLayer"]]} />
        </Palette>
        <Viewport>
          <ViewLabel>[−][SE Isometric][Conceptual]</ViewLabel>
          <Model />
          <ViewCube />
          <CommandWindow>
            <CommandGrip>
              <svg width="18" height="6" viewBox="0 0 18 6"><path d="M0 1H18M0 3H18M0 5H18" stroke="#b5b5b5" strokeDasharray="1 1" /></svg>
              <svg width="10" height="10" viewBox="0 0 10 10"><path d="M1 1L9 9M9 1L1 9" stroke="#e2e2e2" strokeWidth="1.800" /></svg>
              <svg width="14" height="14" viewBox="0 0 14 14" fill="none"><path d="M5 5L12 12" stroke="#e2e2e2" strokeWidth="3" /><path d="M4 1A3 3 0 1 1 1 4" stroke="#e2e2e2" strokeWidth="2" /></svg>
            </CommandGrip>
            <div>
              <CommandLog>{log.map((l, i) => <div key={i}>{l}</div>)}</CommandLog>
              <CommandInput>
                <svg width="15" height="13" viewBox="0 0 15 13" fill="none"><rect x=".5" y=".5" width="14" height="12" fill="#a4b0bb" stroke="#5e6a75" /><path d="M3 3L7 6L3 9M7 10H12" stroke="#1b2630" strokeWidth="1.300" /></svg>
                <Caret color="#555" />
                <input aria-label="Command" placeholder="Type a command" />
                <svg width="8" height="5" viewBox="0 0 8 5"><path d="M0 5H8L4 0Z" fill="#000" /></svg>
              </CommandInput>
            </div>
          </CommandWindow>
        </Viewport>
      </Workarea>

      <Footer>
        <LayoutTabs>
          {[["Model", 61], ["TEMP", 56], ["0.00", 48], ["01", 38], ["02", 40]].map(([t, w], i) => (
            <LayoutTab key={t} $w={w} $on={i === 0}>{t}</LayoutTab>
          ))}
          <AddLayout aria-label="New layout"><Plus /></AddLayout>
        </LayoutTabs>
        <StatusBar>
          <StatusCell $w={50}><button>MODEL</button></StatusCell>
          {statusCells.map(([w, items]) => (
            <StatusCell key={items.join()} $w={w}>
              {items.map((k, i) => <button key={i} aria-label={k === "v" ? "Options" : k}>{k === "v" ? <Caret size={8} /> : st[k]}</button>)}
            </StatusCell>
          ))}
        </StatusBar>
      </Footer>

      <Taskbar>
        <StartButton aria-label="Start">
          <svg width="16" height="16" viewBox="0 0 16 16"><path d="M0 2L7 1V7.500H0ZM8 1L16 0V7.500H8ZM0 8.500H7V15L0 14ZM8 8.500H16V16L8 15Z" fill="#fff" /></svg>
        </StartButton>
        <SearchBox>
          <svg width="22" height="22" viewBox="0 0 22 22"><circle cx="11" cy="11" r="9" fill="none" stroke="#111" strokeWidth="2.500" /></svg>
          <input aria-label="Windows search" placeholder="Type here to search" />
          <svg width="12" height="17" viewBox="0 0 12 17" fill="none"><rect x="3.500" y=".5" width="5" height="12" rx="1" stroke="#222" /><path d="M1 9V13.500H11V9M6 13V16.500M3 16.500H9" stroke="#222" /></svg>
        </SearchBox>
        <TaskButton $w={50} aria-label="Task view">
          <svg width="17" height="16" viewBox="0 0 17 16" fill="none"><path d="M1 0V3H11V0M1 16V13H11V16M1 5.500H11V10.500H1ZM15 0V3M15 8V16" stroke="#fff" strokeWidth="1.200" /><path d="M13.500 4H16.500V7H13.500Z" fill="#fff" /></svg>
        </TaskButton>
        {apps.map(([name, icon, open, active]) => (
          <TaskButton key={name} aria-label={name} $open={open} $active={active}>{icon}</TaskButton>
        ))}
        <Tray>
          <TrayButton $w={36} aria-label="Help">
            <svg width="22" height="22" viewBox="0 0 22 22"><circle cx="11" cy="11" r="10" fill="#1b93d2" stroke="#fff" strokeWidth="2" /><text x="11" y="17" textAnchor="middle" fontSize="16" fontWeight="700" fill="#fff">?</text></svg>
          </TrayButton>
          <TrayButton aria-label="Hidden icons"><svg width="12" height="7" viewBox="0 0 12 7" fill="none"><path d="M1 6L6 1L11 6" stroke="#fff" strokeWidth="1.300" /></svg></TrayButton>
          <TrayButton aria-label="Network"><svg width="16" height="14" viewBox="0 0 16 14" fill="none"><path d="M5 2.500H15.500V9.500H4M9.500 10V13M6 13H13M.5.500H4.500V4.500H.5ZM2.500 5V12" stroke="#fff" /></svg></TrayButton>
          <TrayButton aria-label="Volume"><svg width="17" height="14" viewBox="0 0 17 14" fill="none"><path d="M.5 5V9H3L6 12V2L3 5ZM8 5C9 6 9 8 8 9M10.500 3.500C12.500 5.500 12.500 8.500 10.500 10.500M13 1.500C16 4.500 16 9.500 13 12.500" stroke="#fff" /></svg></TrayButton>
          <Clock>9:29 AM<br />8/20/2018</Clock>
          <Notify aria-label="Notifications">
            <svg width="16" height="16" viewBox="0 0 16 16"><path d="M0 0H16V12H10L7 15V12H0Z" fill="#fff" /><path d="M3 4H13M3 7H13" stroke="#222" /></svg>
            <span>7</span>
          </Notify>
        </Tray>
      </Taskbar>
    </Window>
  );
}
